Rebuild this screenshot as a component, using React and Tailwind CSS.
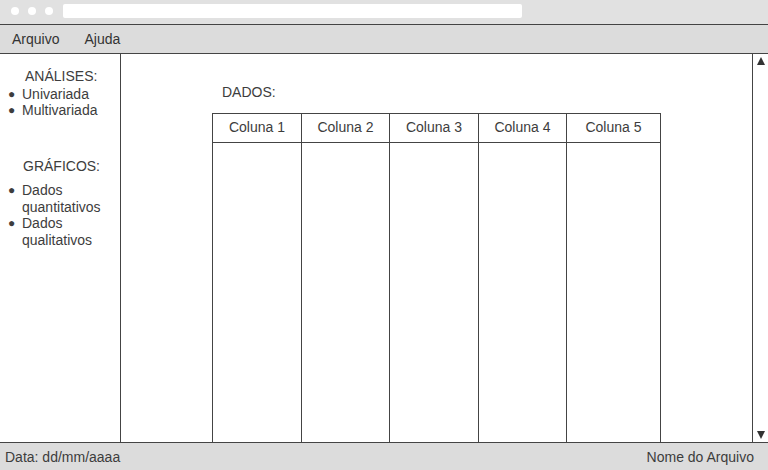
const COLUMNS = [
  { label: 'Coluna 1', w: 'w-[88px]' },
  { label: 'Coluna 2', w: 'w-[88px]' },
  { label: 'Coluna 3', w: 'w-[89px]' },
  { label: 'Coluna 4', w: 'w-[88px]' },
  { label: 'Coluna 5', w: 'w-[94px]' },
]

function Bullet({ children }) {
  return (
    <div className="flex items-start">
      <span className="w-[22px] shrink-0 text-[12px] leading-[16px] pl-[8px]">●</span>
      <span>{children}</span>
    </div>
  )
}

export default function App() {
  return (
    <div className="w-[768px] h-[470px] flex flex-col bg-white text-[14px] text-[#3d3d3d] font-['Liberation_Sans',Arial,sans-serif] overflow-hidden">
      {/* browser chrome */}
      <div className="h-[25px] bg-[#e1e1e1] border-b border-[#444] flex items-center pl-[11px] pb-[2px]">
        <div className="flex gap-[9px]">
          <span className="w-[8px] h-[8px] rounded-full bg-white" />
          <span className="w-[8px] h-[8px] rounded-full bg-white" />
          <span className="w-[8px] h-[8px] rounded-full bg-white" />
        </div>
        <div className="ml-[10px] w-[459px] h-[14px] bg-white rounded-[2px]" />
      </div>

      {/* menu */}
      <div className="h-[29px] bg-[#dcdcdc] border-b border-[#444] flex items-center pl-[12px] gap-[25px] text-[#333]">
        <span>Arquivo</span>
        <span>Ajuda</span>
      </div>

      <div className="flex flex-1 min-h-0">
        {/* sidebar */}
        <div className="w-[121px] border-r border-[#444] pt-[14px] leading-[16px]">
          <div className="pl-[25px]">ANÁLISES:</div>
          <div className="mt-[2px]">
            <Bullet>Univariada</Bullet>
            <Bullet>Multivariada</Bullet>
          </div>
          <div className="pl-[23px] mt-[40px]">GRÁFICOS:</div>
          <div className="mt-[8px] leading-[16.5px]">
            <Bullet>Dados<br />quantitativos</Bullet>
            <Bullet>Dados<br />qualitativos</Bullet>
          </div>
        </div>

        {/* content */}
        <div className="flex-1 flex flex-col pl-[91px] pt-[30px]">
          <div className="pl-[10px] h-[29px] leading-[16px]">DADOS:</div>
          <div className="flex flex-1 border-l border-r border-[#444] w-fit">
            {COLUMNS.map((c, i) => (
              <div key={c.label} className={`${c.w} flex flex-col ${i > 0 ? 'border-l border-[#444]' : ''}`}>
                <div className="h-[30px] border-t border-b border-[#444] flex items-center justify-center pb-[2px]">{c.label}</div>
                <div className="flex-1" />
              </div>
            ))}
          </div>
        </div>

        {/* scrollbar */}
        <div className="w-[16px] border-l border-[#444] flex flex-col items-center justify-between pt-[3px] pb-[3px]">
          <svg width="8" height="8" viewBox="0 0 8 8"><path d="M4 0L8 8H0z" fill="#333" /></svg>
          <svg width="8" height="8" viewBox="0 0 8 8"><path d="M0 0H8L4 8z" fill="#333" /></svg>
        </div>
      </div>

      {/* status bar */}
      <div className="h-[28px] bg-[#dcdcdc] border-t border-[#444] flex items-center justify-between pl-[5px] pr-[14px] pt-[2px]">
        <span>Data: dd/mm/aaaa</span>
        <span>Nome do Arquivo</span>
      </div>
    </div>
  )
}
